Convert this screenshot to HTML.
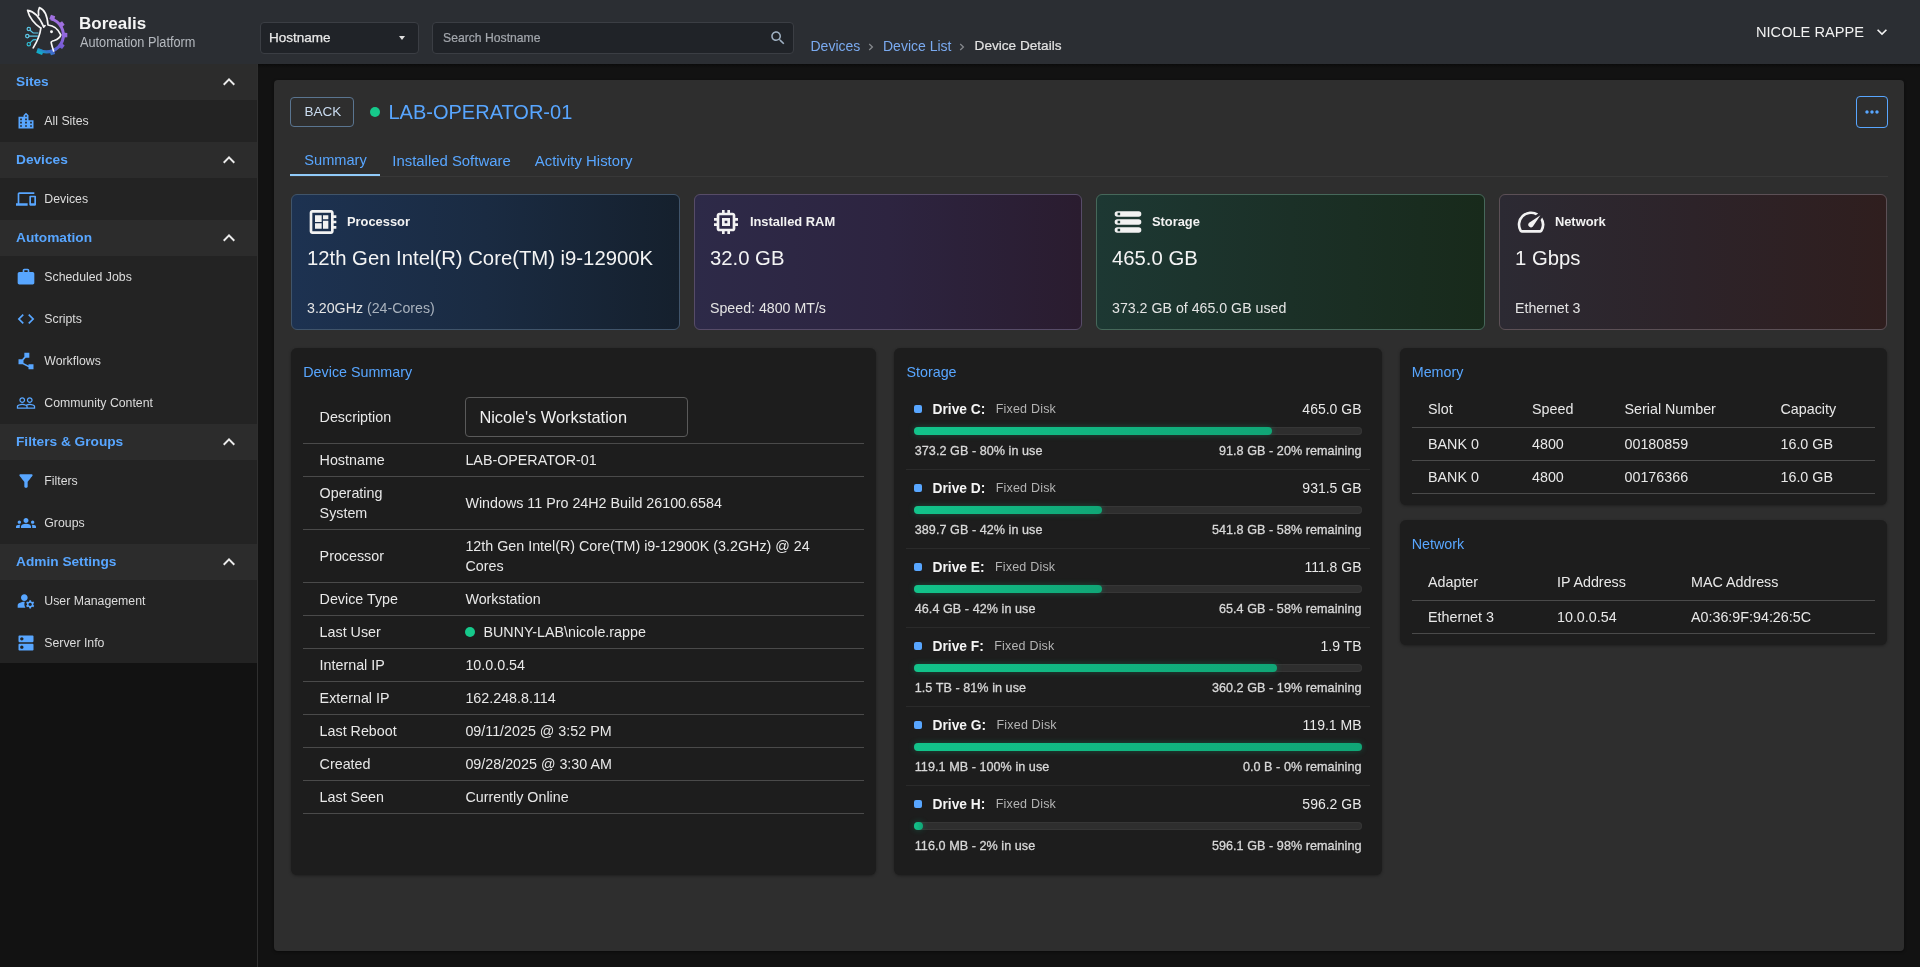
<!DOCTYPE html>
<html><head><meta charset="utf-8">
<style>
*{box-sizing:border-box;margin:0;padding:0}
html,body{width:1920px;height:967px;overflow:hidden;background:#121212;font-family:"Liberation Sans",sans-serif;color:#e6e6e6}
.t{position:absolute;line-height:1;white-space:nowrap}
.ic{position:absolute;display:block}
.bx{position:absolute}
#root{position:absolute;left:0;top:0;width:1920px;height:967px;will-change:transform}
</style></head><body><div id="root">

<div class="bx" style="left:258px;top:64px;width:1662px;height:4px;background:linear-gradient(#0b0b0b,#121212)"></div>
<div class="bx" style="left:0;top:0;width:1920px;height:64px;background:#2b2e33"></div>
<svg class="ic" style="left:15px;top:0px" width="65" height="64" viewBox="0 0 65 64">
<defs><linearGradient id="gg" gradientUnits="userSpaceOnUse" x1="40" y1="20" x2="18" y2="50"><stop offset="0" stop-color="#a070e0"/><stop offset="0.45" stop-color="#7a5cd8"/><stop offset="0.7" stop-color="#4a64cc"/><stop offset="0.82" stop-color="#2f78c8"/><stop offset="0.95" stop-color="#12acc8"/></linearGradient></defs>
<g fill="url(#gg)"><path d="M35.74 18.90 A16.7 16.7 0 1 1 23.86 49.85" fill="none" stroke="url(#gg)" stroke-width="3"/><path d="M39.02 20.66 L40.16 16.19 L35.97 14.83 L34.27 19.11Z"/><path d="M46.11 27.72 L49.66 24.77 L47.07 21.21 L43.17 23.67Z"/><path d="M47.70 37.60 L52.30 37.30 L52.30 32.90 L47.70 32.60Z"/><path d="M43.17 46.53 L47.07 48.99 L49.66 45.43 L46.11 42.48Z"/><path d="M34.27 51.09 L35.97 55.37 L40.16 54.01 L39.02 49.54Z"/><path d="M22.85 47.92 L21.26 52.67 L27.01 54.99 L29.16 50.47Z"/></g>
<g fill="none" stroke="#f6f6f6" stroke-width="1.7" stroke-linejoin="round" stroke-linecap="round">
<path d="M25.6 28 C20 24.5 14 17.5 12.6 10.4 C17.5 11 24 16 28.7 26.8"/>
<path d="M23.6 15.2 C23 12 23.4 9.5 24.4 7.6 C28.5 9 32.2 15 33 25 C38 25.5 43 28.5 45.8 34.9 C45 37.5 42 39.5 39.3 40.5 C37.5 41 36.2 41.5 36.2 42.3 C36.6 45 37.6 48 38.6 51"/>
<path d="M28.7 26.8 L30 25.6"/>
<path d="M25.9 28 C25.3 33 24 38.5 18.2 47.9"/>
</g>
<circle cx="36.5" cy="31.8" r="1.45" fill="#f6f6f6"/>
<g fill="none" stroke="#5cc6e6" stroke-width="1.2" stroke-linecap="round">
<circle cx="13.8" cy="29" r="1.7"/><path d="M15 30.3 L18.2 33 L23.1 33"/>
<circle cx="12.3" cy="36.1" r="1.7"/><path d="M14 36.1 L22.5 36.1"/>
<circle cx="13.8" cy="44.2" r="1.7" stroke="#2fc0d6"/><path d="M15 42.9 L18.2 39.8 L21 39.6" stroke="#3cc0dc"/>
</g>
</svg>
<div class="t" style="left:79px;top:15.41px;font-size:17px;color:#f5f5f5;font-weight:bold;">Borealis</div>
<div class="t" style="left:80px;top:35.05px;font-size:14px;color:#b6bac0;font-weight:normal;transform:scaleX(0.91);transform-origin:0 0;">Automation Platform</div>
<div class="bx" style="left:260px;top:22px;width:159px;height:32px;background:#202328;border:1px solid #3b3e44;border-radius:4px"></div>
<div class="t" style="left:269px;top:30.87px;font-size:13.5px;color:#e8e8e8;font-weight:normal;-webkit-text-stroke:0.25px #e8e8e8;">Hostname</div>
<div class="bx" style="left:398.5px;top:36px;width:0;height:0;border-left:3.6px solid transparent;border-right:3.6px solid transparent;border-top:4.3px solid #e0e0e0"></div>
<div class="bx" style="left:432px;top:22px;width:362px;height:32px;background:#202328;border:1px solid #3b3e44;border-radius:4px"></div>
<div class="t" style="left:443px;top:32.17px;font-size:12.2px;color:#a3a7ad;font-weight:normal;-webkit-text-stroke:0.2px #a3a7ad;">Search Hostname</div>
<svg class="ic" style="left:768.75px;top:29.15px;" width="18" height="18" viewBox="0 0 24 24"><path fill="#9fb0c2" fill-rule="evenodd" d="M15.5 14h-.79l-.28-.27C15.41 12.59 16 11.11 16 9.5 16 5.91 13.09 3 9.5 3S3 5.91 3 9.5 5.91 16 9.5 16c1.61 0 3.09-.59 4.23-1.57l.27.28v.79l5 4.99L20.49 19l-4.99-5zm-6 0C7.01 14 5 11.99 5 9.5S7.01 5 9.5 5 14 7.01 14 9.5 11.99 14 9.5 14z"/></svg>
<div class="t" style="left:810.5px;top:39.15px;font-size:14px;color:#7aaaf0;font-weight:normal;">Devices</div>
<svg class="ic" style="left:868px;top:42.5px" width="6" height="8" viewBox="0 0 6 8"><path d="M1.2 1 L4.4 4 L1.2 7" fill="none" stroke="#85888d" stroke-width="1.3"/></svg>
<div class="t" style="left:883px;top:39.15px;font-size:14px;color:#7aaaf0;font-weight:normal;">Device List</div>
<svg class="ic" style="left:959.3px;top:42.5px" width="6" height="8" viewBox="0 0 6 8"><path d="M1.2 1 L4.4 4 L1.2 7" fill="none" stroke="#85888d" stroke-width="1.3"/></svg>
<div class="t" style="left:974.6px;top:39.49px;font-size:13.6px;color:#e2e2e2;font-weight:normal;-webkit-text-stroke:0.2px #e2e2e2;">Device Details</div>
<div class="t" style="left:1756px;top:24.64px;font-size:14.6px;color:#f2f2f2;font-weight:normal;">NICOLE RAPPE</div>
<svg class="ic" style="left:1872px;top:22.2px;" width="20" height="20" viewBox="0 0 24 24"><path fill="#f2f2f2" fill-rule="evenodd" d="M16.59 8.59 12 13.17 7.41 8.59 6 10l6 6 6-6z"/></svg>
<div class="bx" style="left:0;top:64px;width:257px;height:599px;background:#232323"></div>
<div class="bx" style="left:0;top:64px;width:257px;height:36px;background:#2c2c2c"></div>
<div class="t" style="left:16px;top:75.30px;font-size:13.7px;color:#58a6ff;font-weight:bold;">Sites</div>
<svg class="ic" style="left:217.4px;top:70.4px;" width="24" height="24" viewBox="0 0 24 24"><path fill="#ececec" fill-rule="evenodd" d="M12 8l-6 6 1.41 1.41L12 10.83l4.59 4.58L18 14z"/></svg>
<div class="t" style="left:44.3px;top:114.89px;font-size:12.3px;color:#dcdcdc;font-weight:normal;">All Sites</div>
<svg class="ic" style="left:15.8px;top:111.1px;" width="20" height="20" viewBox="0 0 24 24"><path fill="#58a6ff" fill-rule="evenodd" d="M15 11V5l-3-3-3 3v2H3v14h18V11h-6zm-8 8H5v-2h2v2zm0-4H5v-2h2v2zm0-4H5V9h2v2zm6 8h-2v-2h2v2zm0-4h-2v-2h2v2zm0-4h-2V9h2v2zm0-4h-2V5h2v2zm6 12h-2v-2h2v2zm0-4h-2v-2h2v2z"/></svg>
<div class="bx" style="left:0;top:142px;width:257px;height:36px;background:#2c2c2c"></div>
<div class="t" style="left:16px;top:153.30px;font-size:13.7px;color:#58a6ff;font-weight:bold;">Devices</div>
<svg class="ic" style="left:217.4px;top:148.4px;" width="24" height="24" viewBox="0 0 24 24"><path fill="#ececec" fill-rule="evenodd" d="M12 8l-6 6 1.41 1.41L12 10.83l4.59 4.58L18 14z"/></svg>
<div class="t" style="left:44.3px;top:192.89px;font-size:12.3px;color:#dcdcdc;font-weight:normal;">Devices</div>
<svg class="ic" style="left:15.8px;top:189.1px;" width="20" height="20" viewBox="0 0 24 24"><path fill="#58a6ff" fill-rule="evenodd" d="M4 6h18V4H4c-1.1 0-2 .9-2 2v11H0v3h14v-3H4V6zm19 2h-6c-.55 0-1 .45-1 1v10c0 .55.45 1 1 1h6c.55 0 1-.45 1-1V9c0-.55-.45-1-1-1zm-1 9h-4v-7h4v7z"/></svg>
<div class="bx" style="left:0;top:220px;width:257px;height:36px;background:#2c2c2c"></div>
<div class="t" style="left:16px;top:231.30px;font-size:13.7px;color:#58a6ff;font-weight:bold;">Automation</div>
<svg class="ic" style="left:217.4px;top:226.4px;" width="24" height="24" viewBox="0 0 24 24"><path fill="#ececec" fill-rule="evenodd" d="M12 8l-6 6 1.41 1.41L12 10.83l4.59 4.58L18 14z"/></svg>
<div class="t" style="left:44.3px;top:270.89px;font-size:12.3px;color:#dcdcdc;font-weight:normal;">Scheduled Jobs</div>
<svg class="ic" style="left:15.8px;top:267.1px;" width="20" height="20" viewBox="0 0 24 24"><path fill="#58a6ff" fill-rule="evenodd" d="M20 6h-4V4c0-1.11-.89-2-2-2h-4c-1.11 0-2 .89-2 2v2H4c-1.11 0-1.99.89-1.99 2L2 19c0 1.11.89 2 2 2h16c1.11 0 2-.89 2-2V8c0-1.11-.89-2-2-2zm-6 0h-4V4h4v2z"/></svg>
<div class="t" style="left:44.3px;top:312.89px;font-size:12.3px;color:#dcdcdc;font-weight:normal;">Scripts</div>
<svg class="ic" style="left:15.8px;top:309.1px;" width="20" height="20" viewBox="0 0 24 24"><path fill="#58a6ff" fill-rule="evenodd" d="M9.4 16.6 4.8 12l4.6-4.6L8 6l-6 6 6 6 1.4-1.4zm5.2 0 4.6-4.6-4.6-4.6L16 6l6 6-6 6-1.4-1.4z"/></svg>
<div class="t" style="left:44.3px;top:354.89px;font-size:12.3px;color:#dcdcdc;font-weight:normal;">Workflows</div>
<svg class="ic" style="left:15.8px;top:351.1px;" width="20" height="20" viewBox="0 0 24 24"><path fill="#58a6ff" fill-rule="evenodd" d="M15 16v1.26l-6-3v-3.17L11.7 8H16V2h-6v4.9L7.3 10H3v6h5l7 3.5V22h6v-6z"/></svg>
<div class="t" style="left:44.3px;top:396.89px;font-size:12.3px;color:#dcdcdc;font-weight:normal;">Community Content</div>
<svg class="ic" style="left:15.8px;top:393.1px;" width="20" height="20" viewBox="0 0 24 24"><path fill="#58a6ff" fill-rule="evenodd" d="M16.5 13c-1.2 0-3.07.34-4.5 1-1.43-.67-3.3-1-4.5-1C5.33 13 1 14.08 1 16.25V19h22v-2.75c0-2.17-4.33-3.25-6.5-3.25zm-4 4.5h-10v-1.25c0-.54 2.56-1.75 5-1.75s5 1.21 5 1.75v1.25zm9 0H14v-1.25c0-.46-.2-.86-.52-1.22.88-.3 1.960-.53 3.02-.53 2.44 0 5 1.21 5 1.75v1.25zM7.5 12c1.93 0 3.5-1.57 3.5-3.5S9.43 5 7.5 5 4 6.57 4 8.5 5.57 12 7.5 12zm0-5.5c1.1 0 2 .9 2 2s-.9 2-2 2-2-.9-2-2 .9-2 2-2zm9 5.5c1.93 0 3.5-1.57 3.5-3.5S18.43 5 16.5 5 13 6.57 13 8.5s1.57 3.5 3.5 3.5zm0-5.5c1.1 0 2 .9 2 2s-.9 2-2 2-2-.9-2-2 .9-2 2-2z"/></svg>
<div class="bx" style="left:0;top:424px;width:257px;height:36px;background:#2c2c2c"></div>
<div class="t" style="left:16px;top:435.30px;font-size:13.7px;color:#58a6ff;font-weight:bold;">Filters &amp; Groups</div>
<svg class="ic" style="left:217.4px;top:430.4px;" width="24" height="24" viewBox="0 0 24 24"><path fill="#ececec" fill-rule="evenodd" d="M12 8l-6 6 1.41 1.41L12 10.83l4.59 4.58L18 14z"/></svg>
<div class="t" style="left:44.3px;top:474.89px;font-size:12.3px;color:#dcdcdc;font-weight:normal;">Filters</div>
<svg class="ic" style="left:15.8px;top:471.1px;" width="20" height="20" viewBox="0 0 24 24"><path fill="#58a6ff" fill-rule="evenodd" d="M4.25 5.61C6.27 8.2 10 13 10 13v6c0 .55.45 1 1 1h2c.55 0 1-.45 1-1v-6s3.72-4.8 5.74-7.39c.51-.66.04-1.61-.79-1.61H5.04c-.83 0-1.3.95-.79 1.61z"/></svg>
<div class="t" style="left:44.3px;top:516.89px;font-size:12.3px;color:#dcdcdc;font-weight:normal;">Groups</div>
<svg class="ic" style="left:15.8px;top:513.1px;" width="20" height="20" viewBox="0 0 24 24"><path fill="#58a6ff" fill-rule="evenodd" d="M12 12.75c1.63 0 3.07.39 4.24.9 1.08.48 1.76 1.56 1.76 2.73V18H6v-1.61c0-1.18.68-2.26 1.76-2.73 1.17-.52 2.61-.91 4.24-.91zM4 13c1.1 0 2-.9 2-2s-.9-2-2-2-2 .9-2 2 .9 2 2 2zm1.13 1.1c-.37-.06-.74-.1-1.13-.1-.99 0-1.930.21-2.78.58C.48 14.9 0 15.62 0 16.43V18h4.5v-1.61c0-.83.23-1.61.63-2.29zM20 13c1.1 0 2-.9 2-2s-.9-2-2-2-2 .9-2 2 .9 2 2 2zm4 3.43c0-.81-.48-1.53-1.22-1.85-.85-.37-1.79-.58-2.78-.58-.39 0-.76.04-1.13.1.4.68.63 1.46.63 2.29V18H24v-1.57zM12 6c1.66 0 3 1.34 3 3s-1.34 3-3 3-3-1.34-3-3 1.34-3 3-3z"/></svg>
<div class="bx" style="left:0;top:544px;width:257px;height:36px;background:#2c2c2c"></div>
<div class="t" style="left:16px;top:555.30px;font-size:13.7px;color:#58a6ff;font-weight:bold;">Admin Settings</div>
<svg class="ic" style="left:217.4px;top:550.4px;" width="24" height="24" viewBox="0 0 24 24"><path fill="#ececec" fill-rule="evenodd" d="M12 8l-6 6 1.41 1.41L12 10.83l4.59 4.58L18 14z"/></svg>
<div class="t" style="left:44.3px;top:594.89px;font-size:12.3px;color:#dcdcdc;font-weight:normal;">User Management</div>
<svg class="ic" style="left:15.8px;top:591.1px;" width="20" height="20" viewBox="0 0 24 24"><path fill="#58a6ff" fill-rule="evenodd" d="M10.67 13.02c-.22-.01-.44-.02-.67-.02-2.42 0-4.68.67-6.61 1.820-.88.52-1.39 1.5-1.39 2.53V20h9.26c-.79-1.13-1.26-2.51-1.26-4 0-1.07.25-2.070.67-2.98zM10 12c2.21 0 4-1.79 4-4s-1.79-4-4-4-4 1.79-4 4 1.79 4 4 4zm10.75 4c0-.22-.03-.42-.06-.63l1.14-1.01-1-1.73-1.45.49c-.32-.27-.68-.48-1.08-.63L18 11h-2l-.3 1.49c-.4.15-.76.36-1.08.63l-1.45-.49-1 1.73 1.140 1.01c-.03.21-.06.41-.06.63s.03.42.06.63l-1.14 1.01 1 1.73 1.45-.49c.32.27.68.48 1.08.63L16 21h2l.3-1.49c.4-.15.76-.36 1.08-.63l1.45.49 1-1.73-1.14-1.01c.03-.21.06-.41.06-.63zM17 18c-1.1 0-2-.9-2-2s.9-2 2-2 2 .9 2 2-.9 2-2 2z"/></svg>
<div class="t" style="left:44.3px;top:636.89px;font-size:12.3px;color:#dcdcdc;font-weight:normal;">Server Info</div>
<svg class="ic" style="left:15.8px;top:633.1px;" width="20" height="20" viewBox="0 0 24 24"><path fill="#58a6ff" fill-rule="evenodd" d="M20 13H4c-.55 0-1 .45-1 1v6c0 .55.45 1 1 1h16c.55 0 1-.45 1-1v-6c0-.55-.45-1-1-1zM7 19c-1.1 0-2-.9-2-2s.9-2 2-2 2 .9 2 2-.9 2-2 2zM20 3H4c-.55 0-1 .45-1 1v6c0 .55.45 1 1 1h16c.55 0 1-.45 1-1V4c0-.55-.45-1-1-1zM7 9c-1.1 0-2-.9-2-2s.9-2 2-2 2 .9 2 2-.9 2-2 2z"/></svg>
<div class="bx" style="left:257px;top:64px;width:1px;height:903px;background:#2f2f2f"></div>
<div class="bx" style="left:274px;top:80px;width:1630px;height:871px;background:#2e2e2e;border-radius:4px;box-shadow:0 1px 3px rgba(0,0,0,0.45)"></div>
<div class="bx" style="left:290px;top:97px;width:64px;height:30px;border:1px solid #5a7590;border-radius:4px"></div>
<div class="t" style="left:304.5px;top:104.87px;font-size:13.5px;color:#cadcf0;font-weight:normal;">BACK</div>
<div class="bx" style="left:370px;top:107px;width:10px;height:10px;border-radius:50%;background:#16c98b"></div>
<div class="t" style="left:388.5px;top:101.97px;font-size:20px;color:#58a6ff;font-weight:normal;">LAB-OPERATOR-01</div>
<div class="bx" style="left:1856px;top:96px;width:32px;height:32px;border:1px solid #58a6ff;border-radius:4px"></div>
<svg class="ic" style="left:1862px;top:102px;" width="20" height="20" viewBox="0 0 24 24"><path fill="#58a6ff" fill-rule="evenodd" d="M6 10c-1.1 0-2 .9-2 2s.9 2 2 2 2-.9 2-2-.9-2-2-2zm12 0c-1.1 0-2 .9-2 2s.9 2 2 2 2-.9 2-2-.9-2-2-2zm-6 0c-1.1 0-2 .9-2 2s.9 2 2 2 2-.9 2-2-.9-2-2-2z"/></svg>
<div class="bx" style="left:290px;top:176px;width:1598px;height:1px;background:#383838"></div>
<div class="bx" style="left:290px;top:174px;width:90px;height:2px;background:#90caf9"></div>
<div class="t" style="left:304.3px;top:153.24px;font-size:14.6px;color:#58a6ff;font-weight:normal;">Summary</div>
<div class="t" style="left:392.3px;top:153.59px;font-size:14.9px;color:#58a6ff;font-weight:normal;">Installed Software</div>
<div class="t" style="left:534.8px;top:153.59px;font-size:14.9px;color:#58a6ff;font-weight:normal;">Activity History</div>
<div class="bx" style="left:291px;top:194px;width:389px;height:136px;background:linear-gradient(90deg,#1d3251 0%,#1a2b42 50%,#15202d 100%);border:1px solid #40546a;border-radius:6px"></div>
<svg class="ic" style="left:307px;top:206px;" width="32" height="32" viewBox="0 0 24 24"><path fill="#f2f2f2" fill-rule="evenodd" d="M22 9V7h-2V5c0-1.1-.9-2-2-2H4c-1.1 0-2 .9-2 2v14c0 1.1.9 2 2 2h14c1.1 0 2-.9 2-2v-2h2v-2h-2v-2h2v-2h-2V9h2zm-4 10H4V5h14v14zM6 13h5v4H6zm6-6h4v3h-4zM6 7h5v5H6zm6 4h4v6h-4z"/></svg>
<div class="t" style="left:346.9px;top:215.78px;font-size:12.9px;color:#f2f2f2;font-weight:bold;">Processor</div>
<div class="t" style="left:307px;top:248.02px;font-size:20.3px;color:#f4f4f4;font-weight:normal;">12th Gen Intel(R) Core(TM) i9-12900K</div>
<div class="t" style="left:307px;top:301.28px;font-size:14.2px;color:#e4e4e4;font-weight:normal;">3.20GHz <span style="color:#a9b2bd">(24-Cores)</span></div>
<div class="bx" style="left:694px;top:194px;width:388px;height:136px;background:linear-gradient(90deg,#2d2a48 0%,#2d2440 50%,#2a1c2f 100%);border:1px solid #574c68;border-radius:6px"></div>
<svg class="ic" style="left:710px;top:206px;" width="32" height="32" viewBox="0 0 24 24"><path fill="#f2f2f2" fill-rule="evenodd" d="M15 9H9v6h6V9zm-2 4h-2v-2h2v2zm8-2V9h-2V7c0-1.1-.9-2-2-2h-2V3h-2v2h-2V3H9v2H7c-1.1 0-2 .9-2 2v2H3v2h2v2H3v2h2v2c0 1.1.9 2 2 2h2v2h2v-2h2v2h2v-2h2c1.1 0 2-.9 2-2v-2h2v-2h-2v-2h2zm-4 6H7V7h10v10z"/></svg>
<div class="t" style="left:749.9px;top:215.78px;font-size:12.9px;color:#f2f2f2;font-weight:bold;">Installed RAM</div>
<div class="t" style="left:710px;top:248.02px;font-size:20.3px;color:#f4f4f4;font-weight:normal;">32.0 GB</div>
<div class="t" style="left:710px;top:301.28px;font-size:14.2px;color:#e4e4e4;font-weight:normal;">Speed: 4800 MT/s</div>
<div class="bx" style="left:1096px;top:194px;width:389px;height:136px;background:linear-gradient(90deg,#1d3833 0%,#1b3027 50%,#182a1b 100%);border:1px solid #46685a;border-radius:6px"></div>
<svg class="ic" style="left:1112px;top:206px;" width="32" height="32" viewBox="0 0 24 24"><path fill="#f2f2f2" fill-rule="evenodd" d="M4 4H20A2 2 0 0 1 20 8H4A2 2 0 0 1 4 4Z M4.2 5.1h1.9v1.8h-1.9z M4 10H20A2 2 0 0 1 20 14H4A2 2 0 0 1 4 10Z M4.2 11.1h1.9v1.8h-1.9z M4 16H20A2 2 0 0 1 20 20H4A2 2 0 0 1 4 16Z M4.2 17.1h1.9v1.8h-1.9z"/></svg>
<div class="t" style="left:1151.9px;top:215.78px;font-size:12.9px;color:#f2f2f2;font-weight:bold;">Storage</div>
<div class="t" style="left:1112px;top:248.02px;font-size:20.3px;color:#f4f4f4;font-weight:normal;">465.0 GB</div>
<div class="t" style="left:1112px;top:301.28px;font-size:14.2px;color:#e4e4e4;font-weight:normal;">373.2 GB of 465.0 GB used</div>
<div class="bx" style="left:1499px;top:194px;width:388px;height:136px;background:linear-gradient(90deg,#2c2a33 0%,#2d2329 50%,#2f1e1e 100%);border:1px solid #5c5056;border-radius:6px"></div>
<svg class="ic" style="left:1515px;top:206px;" width="32" height="32" viewBox="0 0 24 24"><path fill="#f2f2f2" fill-rule="evenodd" d="m20.38 8.57-1.23 1.85a8 8 0 0 1-.22 7.58H5.07A8 8 0 0 1 15.58 6.85l1.85-1.23A10 10 0 0 0 3.35 19a2 2 0 0 0 1.72 1h13.85a2 2 0 0 0 1.74-1 10 10 0 0 0-.27-10.44zm-9.79 6.84a2 2 0 0 0 2.83 0l5.66-8.49-8.49 5.66a2 2 0 0 0 0 2.83z"/></svg>
<div class="t" style="left:1554.9px;top:215.78px;font-size:12.9px;color:#f2f2f2;font-weight:bold;">Network</div>
<div class="t" style="left:1515px;top:248.02px;font-size:20.3px;color:#f4f4f4;font-weight:normal;">1 Gbps</div>
<div class="t" style="left:1515px;top:301.28px;font-size:14.2px;color:#e4e4e4;font-weight:normal;">Ethernet 3</div>
<div class="bx" style="left:291px;top:348px;width:585px;height:527px;background:#1d1d1d;border-radius:6px;box-shadow:0 1px 3px rgba(0,0,0,0.35)"></div>
<div class="bx" style="left:894px;top:348px;width:488px;height:527px;background:#1d1d1d;border-radius:6px;box-shadow:0 1px 3px rgba(0,0,0,0.35)"></div>
<div class="bx" style="left:1400px;top:348px;width:487px;height:157px;background:#1d1d1d;border-radius:6px;box-shadow:0 1px 3px rgba(0,0,0,0.35)"></div>
<div class="bx" style="left:1400px;top:520px;width:487px;height:125px;background:#1d1d1d;border-radius:6px;box-shadow:0 1px 3px rgba(0,0,0,0.35)"></div>
<div class="t" style="left:303.3px;top:365.20px;font-size:14.3px;color:#58a6ff;font-weight:normal;">Device Summary</div>
<div class="t" style="left:906.5px;top:365.20px;font-size:14.3px;color:#58a6ff;font-weight:normal;">Storage</div>
<div class="t" style="left:1411.75px;top:365.40px;font-size:14.3px;color:#58a6ff;font-weight:normal;">Memory</div>
<div class="t" style="left:1411.75px;top:537.40px;font-size:14.3px;color:#58a6ff;font-weight:normal;">Network</div>
<div class="t" style="left:319.6px;top:410.40px;font-size:14.3px;color:#e8e8e8;font-weight:normal;">Description</div>
<div class="bx" style="left:465px;top:397px;width:223px;height:40px;border:1px solid #5a5a5a;border-radius:4px;background:#1e1e1e"></div>
<div class="t" style="left:479.4px;top:409.02px;font-size:16.4px;color:#f0f0f0;font-weight:normal;">Nicole's Workstation</div>
<div class="bx" style="left:303px;top:443px;width:561px;height:1px;background:#4a4a4a"></div>
<div class="bx" style="left:303px;top:476px;width:561px;height:1px;background:#4a4a4a"></div>
<div class="bx" style="left:303px;top:529px;width:561px;height:1px;background:#4a4a4a"></div>
<div class="bx" style="left:303px;top:582px;width:561px;height:1px;background:#4a4a4a"></div>
<div class="bx" style="left:303px;top:615px;width:561px;height:1px;background:#4a4a4a"></div>
<div class="bx" style="left:303px;top:648px;width:561px;height:1px;background:#4a4a4a"></div>
<div class="bx" style="left:303px;top:681px;width:561px;height:1px;background:#4a4a4a"></div>
<div class="bx" style="left:303px;top:714px;width:561px;height:1px;background:#4a4a4a"></div>
<div class="bx" style="left:303px;top:747px;width:561px;height:1px;background:#4a4a4a"></div>
<div class="bx" style="left:303px;top:780px;width:561px;height:1px;background:#4a4a4a"></div>
<div class="bx" style="left:303px;top:813px;width:561px;height:1px;background:#4a4a4a"></div>
<div class="t" style="left:319.6px;top:453.10px;font-size:14.3px;color:#e8e8e8;font-weight:normal;">Hostname</div>
<div class="t" style="left:465.4px;top:453.10px;font-size:14.3px;color:#e8e8e8;font-weight:normal;">LAB-OPERATOR-01</div>
<div class="t" style="left:319.6px;top:486.40px;font-size:14.3px;color:#e8e8e8;font-weight:normal;">Operating</div>
<div class="t" style="left:319.6px;top:506.40px;font-size:14.3px;color:#e8e8e8;font-weight:normal;">System</div>
<div class="t" style="left:465.4px;top:496.40px;font-size:14.3px;color:#e8e8e8;font-weight:normal;">Windows 11 Pro 24H2 Build 26100.6584</div>
<div class="t" style="left:319.6px;top:549.40px;font-size:14.3px;color:#e8e8e8;font-weight:normal;">Processor</div>
<div class="t" style="left:465.4px;top:539.40px;font-size:14.3px;color:#e8e8e8;font-weight:normal;">12th Gen Intel(R) Core(TM) i9-12900K (3.2GHz) @ 24</div>
<div class="t" style="left:465.4px;top:559.40px;font-size:14.3px;color:#e8e8e8;font-weight:normal;">Cores</div>
<div class="t" style="left:319.6px;top:592.10px;font-size:14.3px;color:#e8e8e8;font-weight:normal;">Device Type</div>
<div class="t" style="left:465.4px;top:592.10px;font-size:14.3px;color:#e8e8e8;font-weight:normal;">Workstation</div>
<div class="t" style="left:319.6px;top:625.10px;font-size:14.3px;color:#e8e8e8;font-weight:normal;">Last User</div>
<div class="bx" style="left:465px;top:627px;width:10px;height:10px;border-radius:50%;background:#16c98b"></div>
<div class="t" style="left:483.5px;top:625.10px;font-size:14.3px;color:#e8e8e8;font-weight:normal;">BUNNY-LAB\nicole.rappe</div>
<div class="t" style="left:319.6px;top:658.10px;font-size:14.3px;color:#e8e8e8;font-weight:normal;">Internal IP</div>
<div class="t" style="left:465.4px;top:658.10px;font-size:14.3px;color:#e8e8e8;font-weight:normal;">10.0.0.54</div>
<div class="t" style="left:319.6px;top:691.10px;font-size:14.3px;color:#e8e8e8;font-weight:normal;">External IP</div>
<div class="t" style="left:465.4px;top:691.10px;font-size:14.3px;color:#e8e8e8;font-weight:normal;">162.248.8.114</div>
<div class="t" style="left:319.6px;top:724.10px;font-size:14.3px;color:#e8e8e8;font-weight:normal;">Last Reboot</div>
<div class="t" style="left:465.4px;top:724.10px;font-size:14.3px;color:#e8e8e8;font-weight:normal;">09/11/2025 @ 3:52 PM</div>
<div class="t" style="left:319.6px;top:757.10px;font-size:14.3px;color:#e8e8e8;font-weight:normal;">Created</div>
<div class="t" style="left:465.4px;top:757.10px;font-size:14.3px;color:#e8e8e8;font-weight:normal;">09/28/2025 @ 3:30 AM</div>
<div class="t" style="left:319.6px;top:790.10px;font-size:14.3px;color:#e8e8e8;font-weight:normal;">Last Seen</div>
<div class="t" style="left:465.4px;top:790.10px;font-size:14.3px;color:#e8e8e8;font-weight:normal;">Currently Online</div>
<div class="bx" style="left:914px;top:405.2px;width:8px;height:8px;border-radius:2px;background:#58a6ff"></div>
<div class="t" style="left:932.5px;top:403.02px;font-size:13.8px;color:#f4f4f4;font-weight:bold;">Drive C:<span style="font-weight:normal;font-size:12.5px;letter-spacing:0.2px;color:#b4b4b4;margin-left:10.3px;position:relative;top:-0.7px">Fixed Disk</span></div>
<div class="t" style="right:558.5px;top:402.15px;font-size:14px;color:#e8e8e8;font-weight:normal;">465.0 GB</div>
<div class="bx" style="left:914px;top:427px;width:448px;height:8px;border-radius:4px;background:#2e2e2e;box-shadow:inset 0 0 0 1px #363636"></div>
<div class="bx" style="left:914px;top:427px;width:358.4px;height:8px;border-radius:4px;background:linear-gradient(90deg,#12c48b,#10a676);box-shadow:0 0 6px rgba(16,196,139,0.3)"></div>
<div class="t" style="left:914.75px;top:445.33px;font-size:12.6px;color:#d8d8d8;font-weight:normal;-webkit-text-stroke:0.3px #d8d8d8;letter-spacing:0.05px;">373.2 GB - 80% in use</div>
<div class="t" style="right:558.5px;top:445.33px;font-size:12.6px;color:#d8d8d8;font-weight:normal;-webkit-text-stroke:0.3px #d8d8d8;letter-spacing:0.05px;">91.8 GB - 20% remaining</div>
<div class="bx" style="left:906px;top:469px;width:464px;height:1px;background:#2a2a2a"></div>
<div class="bx" style="left:914px;top:484.2px;width:8px;height:8px;border-radius:2px;background:#58a6ff"></div>
<div class="t" style="left:932.5px;top:482.02px;font-size:13.8px;color:#f4f4f4;font-weight:bold;">Drive D:<span style="font-weight:normal;font-size:12.5px;letter-spacing:0.2px;color:#b4b4b4;margin-left:10.3px;position:relative;top:-0.7px">Fixed Disk</span></div>
<div class="t" style="right:558.5px;top:481.15px;font-size:14px;color:#e8e8e8;font-weight:normal;">931.5 GB</div>
<div class="bx" style="left:914px;top:506px;width:448px;height:8px;border-radius:4px;background:#2e2e2e;box-shadow:inset 0 0 0 1px #363636"></div>
<div class="bx" style="left:914px;top:506px;width:188.2px;height:8px;border-radius:4px;background:linear-gradient(90deg,#12c48b,#10a676);box-shadow:0 0 6px rgba(16,196,139,0.3)"></div>
<div class="t" style="left:914.75px;top:524.33px;font-size:12.6px;color:#d8d8d8;font-weight:normal;-webkit-text-stroke:0.3px #d8d8d8;letter-spacing:0.05px;">389.7 GB - 42% in use</div>
<div class="t" style="right:558.5px;top:524.33px;font-size:12.6px;color:#d8d8d8;font-weight:normal;-webkit-text-stroke:0.3px #d8d8d8;letter-spacing:0.05px;">541.8 GB - 58% remaining</div>
<div class="bx" style="left:906px;top:548px;width:464px;height:1px;background:#2a2a2a"></div>
<div class="bx" style="left:914px;top:563.2px;width:8px;height:8px;border-radius:2px;background:#58a6ff"></div>
<div class="t" style="left:932.5px;top:561.02px;font-size:13.8px;color:#f4f4f4;font-weight:bold;">Drive E:<span style="font-weight:normal;font-size:12.5px;letter-spacing:0.2px;color:#b4b4b4;margin-left:10.3px;position:relative;top:-0.7px">Fixed Disk</span></div>
<div class="t" style="right:558.5px;top:560.15px;font-size:14px;color:#e8e8e8;font-weight:normal;">111.8 GB</div>
<div class="bx" style="left:914px;top:585px;width:448px;height:8px;border-radius:4px;background:#2e2e2e;box-shadow:inset 0 0 0 1px #363636"></div>
<div class="bx" style="left:914px;top:585px;width:188.2px;height:8px;border-radius:4px;background:linear-gradient(90deg,#12c48b,#10a676);box-shadow:0 0 6px rgba(16,196,139,0.3)"></div>
<div class="t" style="left:914.75px;top:603.33px;font-size:12.6px;color:#d8d8d8;font-weight:normal;-webkit-text-stroke:0.3px #d8d8d8;letter-spacing:0.05px;">46.4 GB - 42% in use</div>
<div class="t" style="right:558.5px;top:603.33px;font-size:12.6px;color:#d8d8d8;font-weight:normal;-webkit-text-stroke:0.3px #d8d8d8;letter-spacing:0.05px;">65.4 GB - 58% remaining</div>
<div class="bx" style="left:906px;top:627px;width:464px;height:1px;background:#2a2a2a"></div>
<div class="bx" style="left:914px;top:642.2px;width:8px;height:8px;border-radius:2px;background:#58a6ff"></div>
<div class="t" style="left:932.5px;top:640.02px;font-size:13.8px;color:#f4f4f4;font-weight:bold;">Drive F:<span style="font-weight:normal;font-size:12.5px;letter-spacing:0.2px;color:#b4b4b4;margin-left:10.3px;position:relative;top:-0.7px">Fixed Disk</span></div>
<div class="t" style="right:558.5px;top:639.15px;font-size:14px;color:#e8e8e8;font-weight:normal;">1.9 TB</div>
<div class="bx" style="left:914px;top:664px;width:448px;height:8px;border-radius:4px;background:#2e2e2e;box-shadow:inset 0 0 0 1px #363636"></div>
<div class="bx" style="left:914px;top:664px;width:362.9px;height:8px;border-radius:4px;background:linear-gradient(90deg,#12c48b,#10a676);box-shadow:0 0 6px rgba(16,196,139,0.3)"></div>
<div class="t" style="left:914.75px;top:682.33px;font-size:12.6px;color:#d8d8d8;font-weight:normal;-webkit-text-stroke:0.3px #d8d8d8;letter-spacing:0.05px;">1.5 TB - 81% in use</div>
<div class="t" style="right:558.5px;top:682.33px;font-size:12.6px;color:#d8d8d8;font-weight:normal;-webkit-text-stroke:0.3px #d8d8d8;letter-spacing:0.05px;">360.2 GB - 19% remaining</div>
<div class="bx" style="left:906px;top:706px;width:464px;height:1px;background:#2a2a2a"></div>
<div class="bx" style="left:914px;top:721.2px;width:8px;height:8px;border-radius:2px;background:#58a6ff"></div>
<div class="t" style="left:932.5px;top:719.02px;font-size:13.8px;color:#f4f4f4;font-weight:bold;">Drive G:<span style="font-weight:normal;font-size:12.5px;letter-spacing:0.2px;color:#b4b4b4;margin-left:10.3px;position:relative;top:-0.7px">Fixed Disk</span></div>
<div class="t" style="right:558.5px;top:718.15px;font-size:14px;color:#e8e8e8;font-weight:normal;">119.1 MB</div>
<div class="bx" style="left:914px;top:743px;width:448px;height:8px;border-radius:4px;background:#2e2e2e;box-shadow:inset 0 0 0 1px #363636"></div>
<div class="bx" style="left:914px;top:743px;width:448.0px;height:8px;border-radius:4px;background:linear-gradient(90deg,#12c48b,#10a676);box-shadow:0 0 6px rgba(16,196,139,0.3)"></div>
<div class="t" style="left:914.75px;top:761.33px;font-size:12.6px;color:#d8d8d8;font-weight:normal;-webkit-text-stroke:0.3px #d8d8d8;letter-spacing:0.05px;">119.1 MB - 100% in use</div>
<div class="t" style="right:558.5px;top:761.33px;font-size:12.6px;color:#d8d8d8;font-weight:normal;-webkit-text-stroke:0.3px #d8d8d8;letter-spacing:0.05px;">0.0 B - 0% remaining</div>
<div class="bx" style="left:906px;top:785px;width:464px;height:1px;background:#2a2a2a"></div>
<div class="bx" style="left:914px;top:800.2px;width:8px;height:8px;border-radius:2px;background:#58a6ff"></div>
<div class="t" style="left:932.5px;top:798.02px;font-size:13.8px;color:#f4f4f4;font-weight:bold;">Drive H:<span style="font-weight:normal;font-size:12.5px;letter-spacing:0.2px;color:#b4b4b4;margin-left:10.3px;position:relative;top:-0.7px">Fixed Disk</span></div>
<div class="t" style="right:558.5px;top:797.15px;font-size:14px;color:#e8e8e8;font-weight:normal;">596.2 GB</div>
<div class="bx" style="left:914px;top:822px;width:448px;height:8px;border-radius:4px;background:#2e2e2e;box-shadow:inset 0 0 0 1px #363636"></div>
<div class="bx" style="left:914px;top:822px;width:9.0px;height:8px;border-radius:4px;background:linear-gradient(90deg,#12c48b,#10a676);box-shadow:0 0 6px rgba(16,196,139,0.3)"></div>
<div class="t" style="left:914.75px;top:840.33px;font-size:12.6px;color:#d8d8d8;font-weight:normal;-webkit-text-stroke:0.3px #d8d8d8;letter-spacing:0.05px;">116.0 MB - 2% in use</div>
<div class="t" style="right:558.5px;top:840.33px;font-size:12.6px;color:#d8d8d8;font-weight:normal;-webkit-text-stroke:0.3px #d8d8d8;letter-spacing:0.05px;">596.1 GB - 98% remaining</div>
<div class="bx" style="left:1412px;top:427px;width:463px;height:1px;background:#4a4a4a"></div>
<div class="bx" style="left:1412px;top:460px;width:463px;height:1px;background:#4a4a4a"></div>
<div class="bx" style="left:1412px;top:493px;width:463px;height:1px;background:#4a4a4a"></div>
<div class="t" style="left:1428px;top:402.40px;font-size:14.3px;color:#e8e8e8;font-weight:normal;">Slot</div>
<div class="t" style="left:1532px;top:402.40px;font-size:14.3px;color:#e8e8e8;font-weight:normal;">Speed</div>
<div class="t" style="left:1624.5px;top:402.40px;font-size:14.3px;color:#e8e8e8;font-weight:normal;">Serial Number</div>
<div class="t" style="left:1780.5px;top:402.40px;font-size:14.3px;color:#e8e8e8;font-weight:normal;">Capacity</div>
<div class="t" style="left:1428px;top:437.15px;font-size:14.3px;color:#e8e8e8;font-weight:normal;">BANK 0</div>
<div class="t" style="left:1532px;top:437.15px;font-size:14.3px;color:#e8e8e8;font-weight:normal;">4800</div>
<div class="t" style="left:1624.5px;top:437.15px;font-size:14.3px;color:#e8e8e8;font-weight:normal;">00180859</div>
<div class="t" style="left:1780.5px;top:437.15px;font-size:14.3px;color:#e8e8e8;font-weight:normal;">16.0 GB</div>
<div class="t" style="left:1428px;top:470.15px;font-size:14.3px;color:#e8e8e8;font-weight:normal;">BANK 0</div>
<div class="t" style="left:1532px;top:470.15px;font-size:14.3px;color:#e8e8e8;font-weight:normal;">4800</div>
<div class="t" style="left:1624.5px;top:470.15px;font-size:14.3px;color:#e8e8e8;font-weight:normal;">00176366</div>
<div class="t" style="left:1780.5px;top:470.15px;font-size:14.3px;color:#e8e8e8;font-weight:normal;">16.0 GB</div>
<div class="bx" style="left:1412px;top:600px;width:463px;height:1px;background:#4a4a4a"></div>
<div class="bx" style="left:1412px;top:633px;width:463px;height:1px;background:#4a4a4a"></div>
<div class="t" style="left:1428px;top:575.40px;font-size:14.3px;color:#e8e8e8;font-weight:normal;">Adapter</div>
<div class="t" style="left:1557px;top:575.40px;font-size:14.3px;color:#e8e8e8;font-weight:normal;">IP Address</div>
<div class="t" style="left:1691px;top:575.40px;font-size:14.3px;color:#e8e8e8;font-weight:normal;">MAC Address</div>
<div class="t" style="left:1428px;top:610.40px;font-size:14.3px;color:#e8e8e8;font-weight:normal;">Ethernet 3</div>
<div class="t" style="left:1557px;top:610.40px;font-size:14.3px;color:#e8e8e8;font-weight:normal;">10.0.0.54</div>
<div class="t" style="left:1691px;top:610.40px;font-size:14.3px;color:#e8e8e8;font-weight:normal;">A0:36:9F:94:26:5C</div>
</div></body></html>
